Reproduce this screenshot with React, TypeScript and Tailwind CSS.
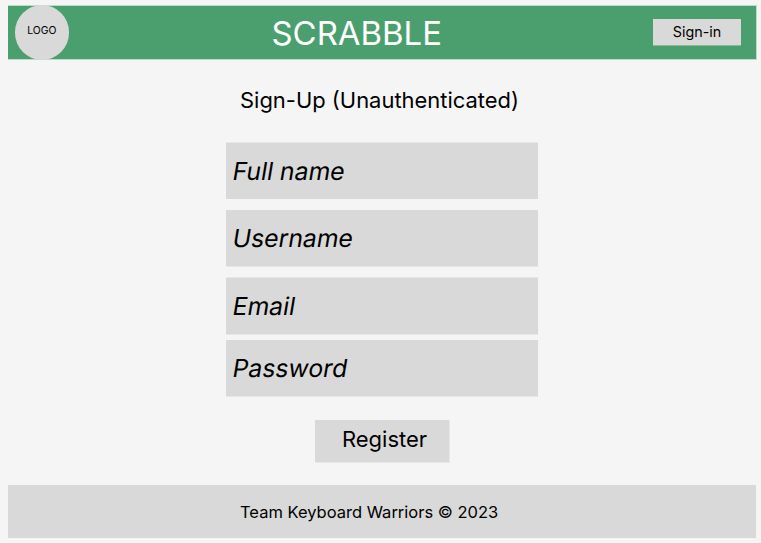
const fields = [
  { label: "Full name", box: "mt-0 h-[57px] border-t" },
  { label: "Username", box: "mt-[11px] h-[57px] border-b" },
  { label: "Email", box: "mt-[10px] h-[58px] border-y" },
  { label: "Password", box: "mt-[5px] h-[57px] border-b" },
];

export default function App() {
  return (
    <div className="flex h-[543px] w-[761px] flex-col overflow-hidden bg-[#f5f5f5] pt-[5px] pr-1 pl-2 font-['Inter',sans-serif] text-black">
      <header className="flex h-[55px] shrink-0 items-start border-y border-r border-[#bcdbc8] bg-[#4b9f6e] bg-clip-padding">
        <div className="-mt-px ml-[6.5px] flex h-[54.5px] w-[54.5px] shrink-0 items-center justify-center rounded-full bg-[#d9d9d9] pb-[3px] text-[10.4px]">LOGO</div>
        <h1 className="mt-[7px] ml-[202.5px] w-[381.5px] text-[32.9px] leading-[40px] whitespace-nowrap text-white">SCRABBLE</h1>
        <button className="mt-[13px] h-[27px] w-[88px] shrink-0 border-b border-[#88b898] bg-[#d9d9d9] text-[14.3px]">Sign-in</button>
      </header>
      <main className="flex h-[425px] shrink-0 flex-col">
        <h2 className="mt-[26px] ml-[232px] h-[28px] text-[21.95px] leading-[28px] whitespace-nowrap">Sign-Up (Unauthenticated)</h2>
        <form className="mt-[28px] ml-[218px] flex w-[312px] flex-col">
          {fields.map((f) => (
            <label key={f.label} className={`flex w-full items-center border-[#e7e7e7] bg-[#d9d9d9] pl-[7px] ${f.box}`}>
              <input aria-label={f.label} placeholder={f.label}
                className="h-[38px] w-[290px] -skew-x-[9.4deg] bg-transparent text-[24.75px] outline-none placeholder:text-black placeholder:opacity-100" />
            </label>
          ))}
          <button type="button" className="mt-[23px] ml-[89px] h-[43px] w-[135px] border-r border-b border-[#e7e7e7] bg-[#d9d9d9] pb-[3px] pl-[5px] text-[22px]">Register</button>
        </form>
      </main>
      <footer className="mr-px flex h-[53px] shrink-0 items-center bg-[#d9d9d9] pt-px pl-[232px] text-[16.5px]">Team Keyboard Warriors © 2023</footer>
    </div>
  );
}
